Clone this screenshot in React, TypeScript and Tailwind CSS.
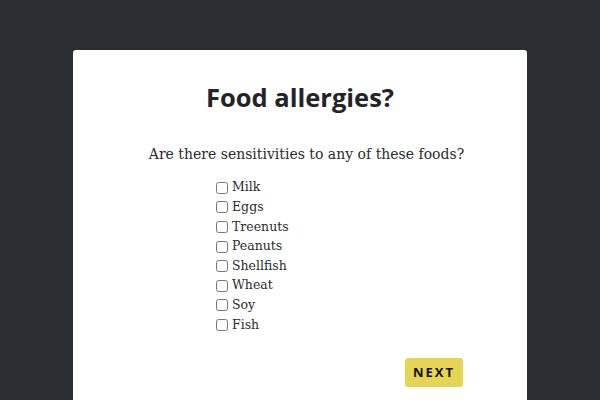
import React from "react";

const foods = ["Milk", "Eggs", "Treenuts", "Peanuts", "Shellfish", "Wheat", "Soy", "Fish"];

export default function App() {
  return (
    <div className="w-[600px] h-[400px] overflow-hidden bg-[#2a2d32] pt-[50px] px-[73px]">
      <div className="bg-white rounded-[3px] h-[400px] flex flex-col">
        <h1
          className="text-center text-[25.5px] font-bold text-[#222428] mt-[31px] leading-[32px]"
          style={{ fontFamily: '"Open Sans", sans-serif' }}
        >
          Food allergies?
        </h1>
        <p
          className="text-center text-[14px] text-[#2b2b2b] mt-[30px] leading-[22px] pl-[13px]"
          style={{ fontFamily: '"DejaVu Serif", serif' }}
        >
          Are there sensitivities to any of these foods?
        </p>
        <div className="w-[168px] mx-auto mt-[13px] flex flex-col" style={{ fontFamily: '"DejaVu Serif", serif' }}>
          {foods.map((f) => (
            <label key={f} className="flex items-center h-[19.6px] text-[12.5px] text-[#2b2b2b]">
              <input type="checkbox" className="w-[12px] h-[12px] m-0 mr-[4px]" />
              {f}
            </label>
          ))}
        </div>
        <div className="flex justify-end pr-[64px] mt-[23px]">
          <button
            className="bg-[#e5d554] rounded-[3px] w-[58px] h-[29px] text-[13px] font-bold tracking-[2px] text-[#111]"
            style={{ fontFamily: '"Open Sans", sans-serif' }}
          >
            NEXT
          </button>
        </div>
      </div>
    </div>
  );
}
